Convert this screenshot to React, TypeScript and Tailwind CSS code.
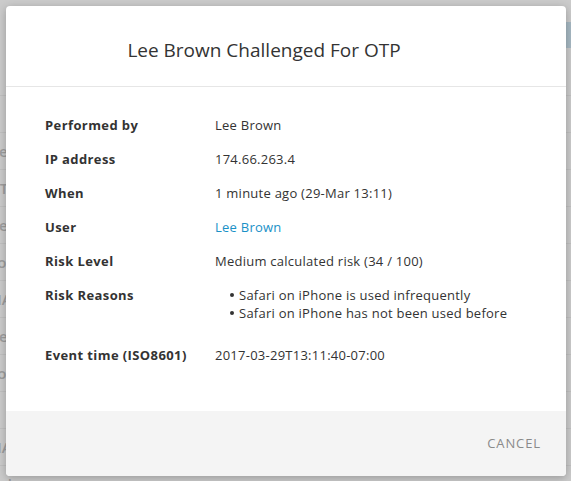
import React from 'react';

const font = { fontFamily: '"Open Sans", "Liberation Sans", sans-serif' };

const details: { label: string; value: React.ReactNode }[] = [
  { label: 'Performed by', value: 'Lee Brown' },
  { label: 'IP address', value: '174.66.263.4' },
  { label: 'When', value: '1 minute ago (29-Mar 13:11)' },
  { label: 'User', value: <a className="text-[#1a91c7]">Lee Brown</a> },
  { label: 'Risk Level', value: 'Medium calculated risk (34 / 100)' },
];

const bgRows = ['Del', 'OTP', 'Del', 'Por', 'MA', 'Del', 'Por', 'ff', 'MA', 'Del', 'Por'];

const App = () => {
  return (
    <div className="relative w-[571px] h-[481px] overflow-hidden bg-[#cbcbcb]" style={font}>
      {/* faded page behind the dialog */}
      <div className="pt-[22px]">
        <div className="h-[37px] flex justify-end">
          <div className="w-[8px] h-[26px] bg-[#a6b8c2]" />
        </div>
        <div className="h-[37px] border-b border-[#c0c0c0]" />
        <div className="h-[37px] border-b border-[#c0c0c0]" />
        {bgRows.map((t, i) => (
          <div key={i} className="h-[37px] border-b border-[#c0c0c0] flex items-center text-[15px] text-[#9d9d9d] font-semibold">
            <span className="-ml-[12px]">{t}</span>
          </div>
        ))}
      </div>

      {/* dialog */}
      <div className="absolute left-[6px] top-[6px] w-[560px] h-[470px] bg-white rounded-[4px] shadow-[0_2px_8px_rgba(0,0,0,0.25)] flex flex-col overflow-hidden">
        <div className="h-[81px] shrink-0 border-b border-[#e6e6e6] flex items-center justify-center pt-[8px] pr-[44px]">
          <h2 className="text-[19px] text-[#333]">Lee Brown Challenged For OTP</h2>
        </div>

        <div className="flex-1 pt-[29px] pl-[39px] text-[13px] text-[#333] leading-[18px] tracking-[0.25px]">
          <div className="flex flex-col gap-[16px]">
            {details.map((d) => (
              <div key={d.label} className="flex">
                <div className="w-[170px] font-bold tracking-[0.4px]">{d.label}</div>
                <div>{d.value}</div>
              </div>
            ))}
            <div className="flex">
              <div className="w-[170px] font-bold tracking-[0.4px]">Risk Reasons</div>
              <ul className="pl-[15px]">
                <li className="flex items-center gap-[5px]">
                  <span className="w-[4px] h-[4px] rounded-full bg-[#333]" />
                  Safari on iPhone is used infrequently
                </li>
                <li className="flex items-center gap-[5px]">
                  <span className="w-[4px] h-[4px] rounded-full bg-[#333]" />
                  Safari on iPhone has not been used before
                </li>
              </ul>
            </div>
            <div className="flex mt-[8px]">
              <div className="w-[170px] font-bold tracking-[0.4px]">Event time (ISO8601)</div>
              <div>2017-03-29T13:11:40-07:00</div>
            </div>
          </div>
        </div>

        <div className="h-[65px] shrink-0 bg-[#f4f4f4] flex items-center justify-end pr-[25px]">
          <button className="text-[13px] text-[#8a8a8a] uppercase tracking-[0.9px]">Cancel</button>
        </div>
      </div>
    </div>
  );
};

export default App;
